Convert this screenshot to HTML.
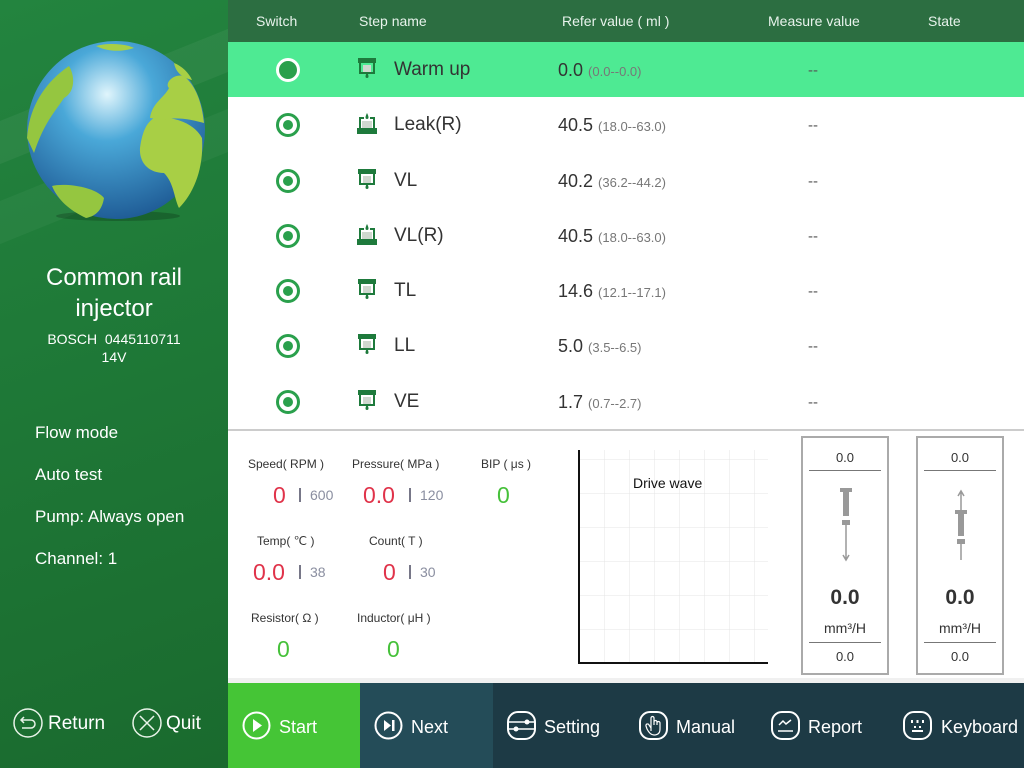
<!DOCTYPE html>
<html><head><meta charset="utf-8"><style>
*{margin:0;padding:0;box-sizing:border-box}
body{width:1024px;height:768px;overflow:hidden;position:relative;font-family:"Liberation Sans",sans-serif;background:#fff}
.side{position:absolute;left:0;top:0;width:228px;height:768px;background:linear-gradient(160deg,#23843f 0%,#1f7a38 40%,#1a6a2e 100%);color:#fff;overflow:hidden}
.hdr{position:absolute;left:228px;top:0;width:796px;height:42px;background:#2c6e41;color:#e8f3ec;font-size:14px}
.hdr span{position:absolute;top:13px}
.row{position:absolute;left:228px;width:796px;height:55px}
.row.hl{background:#4eea93}
.rad{position:absolute;left:48px;top:16px;width:24px;height:24px;border-radius:50%;border:3px solid #2aa04c;background:#fff}
.rad::after{content:"";position:absolute;left:4px;top:4px;width:10px;height:10px;border-radius:50%;background:#2aa04c}
.hl .rad{border-color:#fff;background:#2aa04c}
.hl .rad::after{background:#2aa04c;left:3px;top:3px;width:12px;height:12px}
.ico{position:absolute;left:129px;top:15px}
.nm{position:absolute;left:166px;top:17px;font-size:19px;color:#333}
.rv{position:absolute;left:330px;top:18px;font-size:18px;color:#333}
.rv small{font-size:13px;color:#777}
.mv{position:absolute;left:580px;top:20px;font-size:15px;color:#555}
.lab{position:absolute;font-size:12px;color:#333}
.big{position:absolute;font-size:23px}
.red{color:#e0334a}.grn{color:#46c13a}
.sep{position:absolute;width:2px;height:14px;background:#778}
.sm{position:absolute;font-size:14px;color:#8a8ea0}
.box{position:absolute;top:436px;width:88px;height:239px;border:2px solid #aaa;text-align:center;color:#333}
.tb{position:absolute;top:683px;height:85px;color:#fff;font-size:18px}
.tb svg{position:absolute;top:28px}
.tb span{position:absolute;top:34px}
</style></head><body>
<div class="side">
<div style="position:absolute;left:-40px;top:70px;width:340px;height:40px;background:rgba(255,255,255,.05);transform:rotate(-22deg)"></div>
<div style="position:absolute;left:-40px;top:150px;width:340px;height:40px;background:rgba(255,255,255,.04);transform:rotate(-22deg)"></div>
<svg style="position:absolute;left:24px;top:38px" width="184" height="184" viewBox="0 0 184 184">
<defs><radialGradient id="g" cx="0.45" cy="0.3" r="0.75"><stop offset="0" stop-color="#e0f5fc"/><stop offset=".35" stop-color="#4aa8d8"/><stop offset="1" stop-color="#1b5590"/></radialGradient></defs>
<ellipse cx="94" cy="178" rx="62" ry="5" fill="rgba(0,0,0,.2)"/>
<circle cx="92" cy="92" r="89" fill="url(#g)"/>
<path d="M130 80 C150 78 170 85 178 100 C180 130 170 155 155 170 C150 160 150 145 140 135 C125 135 115 125 116 110 C118 95 122 85 130 80Z" fill="#a8cf45"/>
<path d="M126 80 C128 65 140 60 145 50 C140 45 150 35 160 38 C172 48 178 65 180 85 C170 82 150 78 140 82 Z" fill="#a8cf45"/>
<path d="M150 25 C158 28 165 35 168 42 C160 40 152 36 150 25Z" fill="#a8cf45"/>
<path d="M28 148 C40 145 70 148 80 160 C78 172 72 178 62 180 C45 172 34 162 28 148Z" fill="#95c640"/>
<path d="M3 100 C5 70 20 45 45 28 C52 40 50 55 40 60 C30 75 20 85 10 115 Z" fill="#95c640"/>
<path d="M72 8 C82 5 100 5 110 10 C98 14 84 14 72 8Z" fill="#a8cf45"/>
</svg>
<div style="position:absolute;left:0;width:228px;top:262px;text-align:center;font-size:24px;line-height:31px">Common rail<br>injector</div>
<div style="position:absolute;left:0;width:228px;top:330px;text-align:center;font-size:14px;line-height:18px">BOSCH&nbsp; 0445110711<br>14V</div>
<div style="position:absolute;left:35px;top:412px;font-size:17px;line-height:42px">Flow mode<br>Auto test<br>Pump: Always open<br>Channel: 1</div>
<svg style="position:absolute;left:13px;top:708px" width="30" height="30"><circle cx="15" cy="15" r="14" fill="none" stroke="#e8f3e8" stroke-width="1.5"/><path d="M11 9 L8 12 L11 15 M8 12 H18 A4 4 0 0 1 18 20 H9" fill="none" stroke="#e8f3e8" stroke-width="1.5"/></svg>
<span style="position:absolute;left:48px;top:713px;font-size:19px">Return</span>
<svg style="position:absolute;left:132px;top:708px" width="30" height="30"><circle cx="15" cy="15" r="14" fill="none" stroke="#e8f3e8" stroke-width="1.5"/><path d="M8 8 L22 22 M22 8 L8 22" stroke="#e8f3e8" stroke-width="1.5"/></svg>
<span style="position:absolute;left:166px;top:713px;font-size:19px">Quit</span>
</div>
<div class="hdr"><span style="left:28px">Switch</span><span style="left:131px">Step name</span><span style="left:334px">Refer value ( ml )</span><span style="left:540px">Measure value</span><span style="left:700px">State</span></div>

<svg width="0" height="0" style="position:absolute"><defs>
<g id="i1"><rect x="1" y="1" width="18" height="5" fill="#1e7a3c"/><path d="M3 6 V16 H17 V6" fill="none" stroke="#1e7a3c" stroke-width="2"/><rect x="6" y="8" width="8" height="7" fill="#cfd8cf"/><path d="M10 15 C8 19 8 21 10 21 C12 21 12 19 10 15Z" fill="#1e7a3c"/></g>
<g id="i2"><rect x="0" y="16" width="20" height="6" fill="#1e7a3c"/><path d="M3 16 V6 H7 M13 6 H17 V16" fill="none" stroke="#1e7a3c" stroke-width="2"/><rect x="5" y="9" width="10" height="7" fill="#cfd8cf"/><path d="M10 1 C8 5 8 7 10 7 C12 7 12 5 10 1Z" fill="#1e7a3c"/></g>
</defs></svg>

<div class="row hl" style="top:42px"><div class="rad"></div><svg class="ico" width="20" height="24"><use href="#i1"/></svg><div class="nm">Warm up</div><div class="rv">0.0 <small>(0.0--0.0)</small></div><div class="mv">--</div></div>
<div class="row" style="top:97px"><div class="rad"></div><svg class="ico" width="20" height="24"><use href="#i2"/></svg><div class="nm">Leak(R)</div><div class="rv">40.5 <small>(18.0--63.0)</small></div><div class="mv">--</div></div>
<div class="row" style="top:153px"><div class="rad"></div><svg class="ico" width="20" height="24"><use href="#i1"/></svg><div class="nm">VL</div><div class="rv">40.2 <small>(36.2--44.2)</small></div><div class="mv">--</div></div>
<div class="row" style="top:208px"><div class="rad"></div><svg class="ico" width="20" height="24"><use href="#i2"/></svg><div class="nm">VL(R)</div><div class="rv">40.5 <small>(18.0--63.0)</small></div><div class="mv">--</div></div>
<div class="row" style="top:263px"><div class="rad"></div><svg class="ico" width="20" height="24"><use href="#i1"/></svg><div class="nm">TL</div><div class="rv">14.6 <small>(12.1--17.1)</small></div><div class="mv">--</div></div>
<div class="row" style="top:318px"><div class="rad"></div><svg class="ico" width="20" height="24"><use href="#i1"/></svg><div class="nm">LL</div><div class="rv">5.0 <small>(3.5--6.5)</small></div><div class="mv">--</div></div>
<div class="row" style="top:374px"><div class="rad"></div><svg class="ico" width="20" height="24"><use href="#i1"/></svg><div class="nm">VE</div><div class="rv">1.7 <small>(0.7--2.7)</small></div><div class="mv">--</div></div>
<div style="position:absolute;left:228px;top:429px;width:796px;height:2px;background:#ccc"></div>

<div class="lab" style="left:248px;top:457px">Speed( RPM )</div>
<div class="lab" style="left:352px;top:457px">Pressure( MPa )</div>
<div class="lab" style="left:481px;top:457px">BIP ( μs )</div>
<div class="big red" style="left:273px;top:482px">0</div><div class="sep" style="left:299px;top:488px"></div><div class="sm" style="left:310px;top:487px">600</div>
<div class="big red" style="left:363px;top:482px">0.0</div><div class="sep" style="left:409px;top:488px"></div><div class="sm" style="left:420px;top:487px">120</div>
<div class="big grn" style="left:497px;top:482px">0</div>
<div class="lab" style="left:257px;top:534px">Temp( ℃ )</div>
<div class="lab" style="left:369px;top:534px">Count( T )</div>
<div class="big red" style="left:253px;top:559px">0.0</div><div class="sep" style="left:299px;top:565px"></div><div class="sm" style="left:310px;top:564px">38</div>
<div class="big red" style="left:383px;top:559px">0</div><div class="sep" style="left:409px;top:565px"></div><div class="sm" style="left:420px;top:564px">30</div>
<div class="lab" style="left:251px;top:611px">Resistor( Ω )</div>
<div class="lab" style="left:357px;top:611px">Inductor( μH )</div>
<div class="big grn" style="left:277px;top:636px">0</div>
<div class="big grn" style="left:387px;top:636px">0</div>

<div style="position:absolute;left:578px;top:450px;width:190px;height:214px;border-left:2px solid #111;border-bottom:2px solid #111;background-image:linear-gradient(to right,transparent 24px,#e4e4e4 24px,transparent 25px),linear-gradient(to bottom,transparent 33px,#e4e4e4 33px,transparent 34px);background-size:25px 100%,100% 34px;background-position:0 0,0 -24px"></div>
<div style="position:absolute;left:633px;top:475px;font-size:14px;color:#111">Drive wave</div>

<div class="box" style="left:801px">
<div style="margin:12px 0 0;font-size:13px">0.0</div>
<div style="margin:5px 6px 0;border-top:1px solid #777"></div>
<svg style="position:absolute;left:37px;top:50px" width="12" height="75"><rect x="0" y="0" width="12" height="4" fill="#999"/><rect x="3" y="0" width="6" height="28" fill="#999"/><rect x="2" y="32" width="8" height="5" fill="#999"/><path d="M6 37 V72 M3 67 L6 72 L9 67" stroke="#999" stroke-width="1.5" fill="none"/></svg>
<div style="position:absolute;left:0;right:0;top:148px;font-size:21px;font-weight:bold">0.0</div>
<div style="position:absolute;left:0;right:0;top:182px;font-size:14px">mm³/H</div>
<div style="position:absolute;left:6px;right:6px;top:204px;border-top:1px solid #777"></div>
<div style="position:absolute;left:0;right:0;top:211px;font-size:13px">0.0</div>
</div>
<div class="box" style="left:916px">
<div style="margin:12px 0 0;font-size:13px">0.0</div>
<div style="margin:5px 6px 0;border-top:1px solid #777"></div>
<svg style="position:absolute;left:37px;top:50px" width="12" height="75"><path d="M6 3 V22 M3 8 L6 3 L9 8" stroke="#999" stroke-width="1.5" fill="none"/><rect x="0" y="22" width="12" height="4" fill="#999"/><rect x="3" y="22" width="6" height="26" fill="#999"/><rect x="2" y="51" width="8" height="5" fill="#999"/><path d="M6 56 V72" stroke="#999" stroke-width="1.5"/></svg>
<div style="position:absolute;left:0;right:0;top:148px;font-size:21px;font-weight:bold">0.0</div>
<div style="position:absolute;left:0;right:0;top:182px;font-size:14px">mm³/H</div>
<div style="position:absolute;left:6px;right:6px;top:204px;border-top:1px solid #777"></div>
<div style="position:absolute;left:0;right:0;top:211px;font-size:13px">0.0</div>
</div>
<div style="position:absolute;left:228px;top:678px;width:796px;height:5px;background:#f0f0f0"></div>

<div class="tb" style="left:228px;width:132px;background:#45c536"><svg style="left:14px" width="29" height="29"><circle cx="14.5" cy="14.5" r="13" fill="none" stroke="#fff" stroke-width="2"/><path d="M11 8 L20 14.5 L11 21Z" fill="#fff"/></svg><span style="left:51px">Start</span></div>
<div class="tb" style="left:360px;width:133px;background:#244c58"><svg style="left:14px" width="29" height="29"><circle cx="14.5" cy="14.5" r="13" fill="none" stroke="#fff" stroke-width="2"/><path d="M10 9 L17 14.5 L10 20Z" fill="#fff"/><rect x="18" y="9" width="2.5" height="11" fill="#fff"/></svg><span style="left:51px">Next</span></div>
<div class="tb" style="left:493px;width:531px;background:#1d3a45">
<svg style="left:14px" width="29" height="29"><rect x="1" y="1" width="27" height="27" rx="10" fill="none" stroke="#fff" stroke-width="2"/><path d="M2 11 H27 M2 18 H27" stroke="#fff" stroke-width="1.5"/><circle cx="20" cy="11" r="2.5" fill="#fff"/><circle cx="9" cy="18" r="2.5" fill="#fff"/></svg><span style="left:51px">Setting</span>
<svg style="left:146px" width="29" height="29"><rect x="1" y="1" width="27" height="27" rx="10" fill="none" stroke="#fff" stroke-width="2"/><path d="M12 20 V7 a1.5 1.5 0 0 1 3 0 V14 M15 11 a1.5 1.5 0 0 1 3 0 V14 M18 12 a1.5 1.5 0 0 1 3 0 V18 Q21 24 15 24 Q11 24 8 18 L7 15 a1.5 1.5 0 0 1 3 -1 L12 17" fill="none" stroke="#fff" stroke-width="1.2"/></svg><span style="left:183px">Manual</span>
<svg style="left:278px" width="29" height="29"><rect x="1" y="1" width="27" height="27" rx="10" fill="none" stroke="#fff" stroke-width="2"/><path d="M8 14 L12 10 L15 13 L20 9 M7 20 H22" fill="none" stroke="#fff" stroke-width="1.5"/></svg><span style="left:315px">Report</span>
<svg style="left:410px" width="29" height="29"><rect x="1" y="1" width="27" height="27" rx="10" fill="none" stroke="#fff" stroke-width="2"/><path d="M9 9 V12 M14.5 9 V12 M20 9 V12 M12 15 V17 M17 15 V17 M9 20 H20" stroke="#fff" stroke-width="2"/></svg><span style="left:448px">Keyboard</span>
</div>
</body></html>
